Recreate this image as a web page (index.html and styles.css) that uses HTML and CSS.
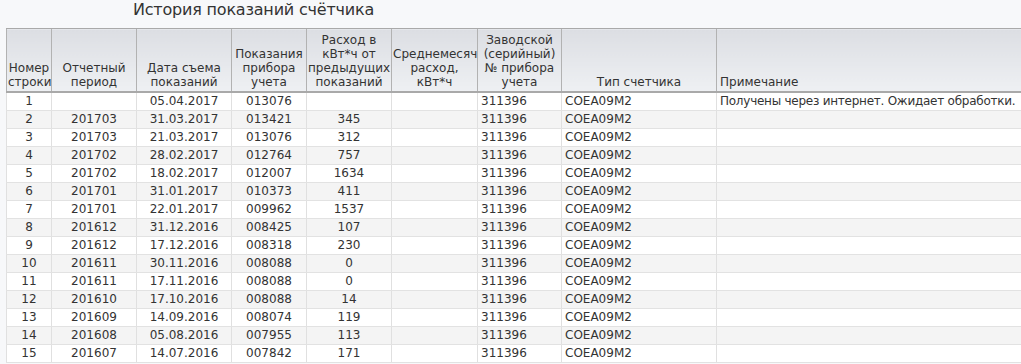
FILE: index.html
```html
<!DOCTYPE html>
<html lang="ru">
<head>
<meta charset="utf-8">
<title>История показаний счётчика</title>
<link rel="stylesheet" href="styles.css">
</head>
<body>
<div class="title">История показаний счётчика</div>
<table class="grid">
<colgroup>
<col class="c1"><col class="c2"><col class="c3"><col class="c4"><col class="c5"><col class="c6"><col class="c7"><col class="c8"><col class="c9">
</colgroup>
<thead>
<tr>
<th>Номер строки</th>
<th>Отчетный период</th>
<th>Дата съема показаний</th>
<th>Показания прибора учета</th>
<th>Расход в кВт*ч от предыдущих показаний</th>
<th>Среднемесячный расход, кВт*ч</th>
<th>Заводской (серийный) № прибора учета</th>
<th>Тип счетчика</th>
<th class="left">Примечание</th>
</tr>
</thead>
<tbody>
<tr><td>1</td><td></td><td>05.04.2017</td><td>013076</td><td></td><td></td><td class="left">311396</td><td class="left">COEA09M2</td><td class="left note">Получены через интернет. Ожидает обработки.</td></tr>
<tr><td>2</td><td>201703</td><td>31.03.2017</td><td>013421</td><td>345</td><td></td><td class="left">311396</td><td class="left">COEA09M2</td><td></td></tr>
<tr><td>3</td><td>201703</td><td>21.03.2017</td><td>013076</td><td>312</td><td></td><td class="left">311396</td><td class="left">COEA09M2</td><td></td></tr>
<tr><td>4</td><td>201702</td><td>28.02.2017</td><td>012764</td><td>757</td><td></td><td class="left">311396</td><td class="left">COEA09M2</td><td></td></tr>
<tr><td>5</td><td>201702</td><td>18.02.2017</td><td>012007</td><td>1634</td><td></td><td class="left">311396</td><td class="left">COEA09M2</td><td></td></tr>
<tr><td>6</td><td>201701</td><td>31.01.2017</td><td>010373</td><td>411</td><td></td><td class="left">311396</td><td class="left">COEA09M2</td><td></td></tr>
<tr><td>7</td><td>201701</td><td>22.01.2017</td><td>009962</td><td>1537</td><td></td><td class="left">311396</td><td class="left">COEA09M2</td><td></td></tr>
<tr><td>8</td><td>201612</td><td>31.12.2016</td><td>008425</td><td>107</td><td></td><td class="left">311396</td><td class="left">COEA09M2</td><td></td></tr>
<tr><td>9</td><td>201612</td><td>17.12.2016</td><td>008318</td><td>230</td><td></td><td class="left">311396</td><td class="left">COEA09M2</td><td></td></tr>
<tr><td>10</td><td>201611</td><td>30.11.2016</td><td>008088</td><td>0</td><td></td><td class="left">311396</td><td class="left">COEA09M2</td><td></td></tr>
<tr><td>11</td><td>201611</td><td>17.11.2016</td><td>008088</td><td>0</td><td></td><td class="left">311396</td><td class="left">COEA09M2</td><td></td></tr>
<tr><td>12</td><td>201610</td><td>17.10.2016</td><td>008088</td><td>14</td><td></td><td class="left">311396</td><td class="left">COEA09M2</td><td></td></tr>
<tr><td>13</td><td>201609</td><td>14.09.2016</td><td>008074</td><td>119</td><td></td><td class="left">311396</td><td class="left">COEA09M2</td><td></td></tr>
<tr><td>14</td><td>201608</td><td>05.08.2016</td><td>007955</td><td>113</td><td></td><td class="left">311396</td><td class="left">COEA09M2</td><td></td></tr>
<tr><td>15</td><td>201607</td><td>14.07.2016</td><td>007842</td><td>171</td><td></td><td class="left">311396</td><td class="left">COEA09M2</td><td></td></tr>
</tbody>
</table>
</body>
</html>
```
FILE: styles.css
```css
html, body {
  margin: 0;
  padding: 0;
  background: #f7f8fa;
  font-family: "DejaVu Sans", Verdana, sans-serif;
  color: #333;
}
.title {
  height: 28px;
  padding-left: 133px;
  font-size: 16px;
  letter-spacing: -0.2px;
  line-height: 19px;
  color: #333;
}
.grid {
  margin-left: 6px;
  width: 1020px;
  table-layout: fixed;
  border-collapse: collapse;
  background: #fff;
  font-size: 12px;
}
.c1 { width: 45px; }
.c2 { width: 85px; }
.c3 { width: 95px; }
.c4 { width: 75px; }
.c5 { width: 85px; }
.c6 { width: 86px; }
.c7 { width: 84px; }
.c8 { width: 155px; }
.c9 { width: 310px; }
.grid th {
  height: 60px;
  padding: 0 1px 2px;
  font-weight: normal;
  line-height: 14px;
  vertical-align: bottom;
  text-align: center;
  overflow: hidden;
  white-space: normal;
  color: #333;
  background: linear-gradient(#dcdee3, #eef0f3);
  border-top: 1px solid #a9a9a9;
  border-bottom: 2px solid #a9a9a9;
  border-left: 1px solid #b2b2b2;
}
.grid td {
  height: 17px;
  padding: 0 3px;
  line-height: 17px;
  text-align: center;
  white-space: nowrap;
  overflow: hidden;
  border-left: 1px solid #e0e0e0;
  border-bottom: 1px solid #e2e2e2;
}
.grid th.left, .grid td.left {
  text-align: left;
  padding-left: 3px;
}
.grid td.note {
  letter-spacing: -0.25px;
}
.grid tbody tr:nth-child(even) td {
  background: #f4f4f4;
}
```
